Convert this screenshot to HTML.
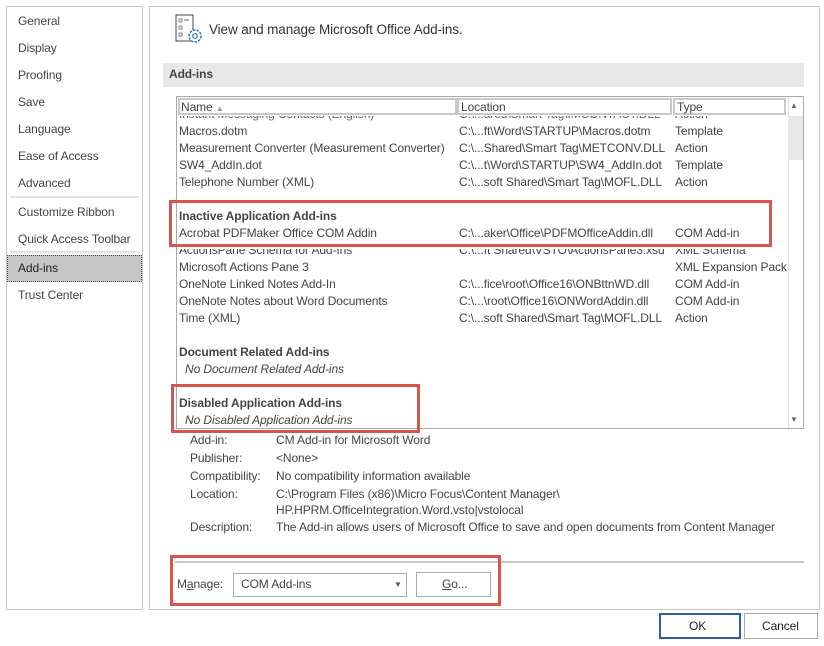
<!DOCTYPE html>
<html><head><meta charset="utf-8"><style>
*{margin:0;padding:0;box-sizing:border-box}
body{width:824px;height:646px;background:#fff;font-family:"Liberation Sans",sans-serif;font-size:12px;letter-spacing:-0.1px;color:#444;position:relative;overflow:hidden}
.a{position:absolute;white-space:nowrap;line-height:14px}
.b{font-weight:bold}
.i{font-style:italic}
.red{position:absolute;border:3px solid #d9534f}
</style></head><body>
<div class="a" style="left:6px;top:6px;width:137px;height:604px;border:1px solid #c8c8c8"></div>
<div class="a" style="left:18px;top:14px">General</div>
<div class="a" style="left:18px;top:41px">Display</div>
<div class="a" style="left:18px;top:68px">Proofing</div>
<div class="a" style="left:18px;top:95px">Save</div>
<div class="a" style="left:18px;top:122px">Language</div>
<div class="a" style="left:18px;top:149px">Ease of Access</div>
<div class="a" style="left:18px;top:176px">Advanced</div>
<div class="a" style="left:10px;top:196px;width:129px;height:2px;background:#e3e3e3"></div>
<div class="a" style="left:18px;top:205px">Customize Ribbon</div>
<div class="a" style="left:18px;top:232px">Quick Access Toolbar</div>
<div class="a" style="left:10px;top:251px;width:129px;height:2px;background:#e3e3e3"></div>
<div class="a" style="left:7px;top:255px;width:135px;height:27px;background:#c6c6c6;border:1px dotted #555"></div>
<div class="a" style="left:18px;top:261px;color:#222">Add-ins</div>
<div class="a" style="left:18px;top:288px">Trust Center</div>
<div class="a" style="left:149px;top:6px;width:671px;height:604px;border:1px solid #c8c8c8"></div>
<svg class="a" style="left:175px;top:14px" width="30" height="32" viewBox="0 0 30 32"><rect x="1" y="1" width="17" height="26" fill="none" stroke="#444"/><rect x="4" y="5" width="3" height="3" fill="none" stroke="#666" stroke-width=".8"/><line x1="9" y1="6" x2="14" y2="6" stroke="#666"/><rect x="4" y="12" width="3" height="3" fill="none" stroke="#666" stroke-width=".8"/><rect x="4" y="19" width="3" height="3" fill="none" stroke="#666" stroke-width=".8"/><circle cx="20" cy="22" r="6" fill="#fff" stroke="#2b79c2" stroke-width="1.5" stroke-dasharray="2.5 1.2"/><circle cx="20" cy="22" r="2.3" fill="none" stroke="#2b79c2" stroke-width="1.2"/></svg>
<div class="a" style="left:209px;top:23px;font-size:13.5px;color:#333">View and manage Microsoft Office Add-ins.</div>
<div class="a" style="left:163px;top:63px;width:641px;height:24px;background:#e8e8e8"></div>
<div class="a b" style="left:169px;top:67px">Add-ins</div>
<div class="a" style="left:176px;top:96px;width:628px;height:333px;border:1px solid #aaa;overflow:hidden">
 <div class="a" style="left:0;top:18px;width:610px;height:300px;overflow:hidden">
  <div class="a" style="left:2px;top:-8px;color:#666">Instant Messaging Contacts (English)</div><div class="a" style="left:282px;top:-8px;color:#666">C:\...ared\Smart Tag\IMCONTACT.DLL</div><div class="a" style="left:498px;top:-8px;color:#666">Action</div>
 </div>
 <div class="a" style="left:0;top:0;width:611px;height:19px;background:#fff"></div>
 <div class="a" style="left:1px;top:1px;width:279px;height:17px;border:2px solid #c8c8c8"></div>
 <div class="a" style="left:4px;top:3px">Name <span style="font-size:8px;color:#999">&#9650;</span></div>
 <div class="a" style="left:280px;top:1px;width:215px;height:17px;border:2px solid #c8c8c8"></div>
 <div class="a" style="left:284px;top:3px">Location</div>
 <div class="a" style="left:496px;top:1px;width:113px;height:17px;border:2px solid #c8c8c8"></div>
 <div class="a" style="left:500px;top:3px">Type</div>
 <div class="a" style="left:611px;top:0;width:16px;height:331px;border-left:1px solid #ddd"></div>
 <div class="a" style="left:611px;top:19px;width:16px;height:44px;background:#e8e8e8"></div>
 <div class="a" style="left:613px;top:2px;font-size:8px;color:#666">&#9650;</div>
 <div class="a" style="left:613px;top:316px;font-size:8px;color:#666">&#9660;</div>
</div>
<div class="a" style="left:179px;top:124px">Macros.dotm</div><div class="a" style="left:459px;top:124px">C:\...ft\Word\STARTUP\Macros.dotm</div><div class="a" style="left:675px;top:124px">Template</div>
<div class="a" style="left:179px;top:141px">Measurement Converter (Measurement Converter)</div><div class="a" style="left:459px;top:141px">C:\...Shared\Smart Tag\METCONV.DLL</div><div class="a" style="left:675px;top:141px">Action</div>
<div class="a" style="left:179px;top:158px">SW4_AddIn.dot</div><div class="a" style="left:459px;top:158px">C:\...t\Word\STARTUP\SW4_AddIn.dot</div><div class="a" style="left:675px;top:158px">Template</div>
<div class="a" style="left:179px;top:175px">Telephone Number (XML)</div><div class="a" style="left:459px;top:175px">C:\...soft Shared\Smart Tag\MOFL.DLL</div><div class="a" style="left:675px;top:175px">Action</div>
<div class="a b" style="left:179px;top:209px">Inactive Application Add-ins</div>
<div class="a" style="left:179px;top:226px">Acrobat PDFMaker Office COM Addin</div><div class="a" style="left:459px;top:226px">C:\...aker\Office\PDFMOfficeAddin.dll</div><div class="a" style="left:675px;top:226px">COM Add-in</div>
<div class="a" style="left:179px;top:249px;height:8px;overflow:hidden"><div style="margin-top:-6px">ActionsPane Schema for Add-Ins</div></div>
<div class="a" style="left:459px;top:249px;height:8px;overflow:hidden"><div style="margin-top:-6px">C:\...ft Shared\VSTO\ActionsPane3.xsd</div></div>
<div class="a" style="left:675px;top:249px;height:8px;overflow:hidden"><div style="margin-top:-6px">XML Schema</div></div>
<div class="a" style="left:179px;top:260px">Microsoft Actions Pane 3</div><div class="a" style="left:675px;top:260px">XML Expansion Pack</div>
<div class="a" style="left:179px;top:277px">OneNote Linked Notes Add-In</div><div class="a" style="left:459px;top:277px">C:\...fice\root\Office16\ONBttnWD.dll</div><div class="a" style="left:675px;top:277px">COM Add-in</div>
<div class="a" style="left:179px;top:294px">OneNote Notes about Word Documents</div><div class="a" style="left:459px;top:294px">C:\...\root\Office16\ONWordAddin.dll</div><div class="a" style="left:675px;top:294px">COM Add-in</div>
<div class="a" style="left:179px;top:311px">Time (XML)</div><div class="a" style="left:459px;top:311px">C:\...soft Shared\Smart Tag\MOFL.DLL</div><div class="a" style="left:675px;top:311px">Action</div>
<div class="a b" style="left:179px;top:345px">Document Related Add-ins</div>
<div class="a i" style="left:185px;top:362px">No Document Related Add-ins</div>
<div class="a b" style="left:179px;top:396px">Disabled Application Add-ins</div>
<div class="a i" style="left:185px;top:413px">No Disabled Application Add-ins</div>
<div class="red" style="left:169px;top:200px;width:603px;height:47px"></div>
<div class="red" style="left:171px;top:384px;width:249px;height:49px"></div>
<div class="a" style="left:190px;top:433px;height:13px;overflow:hidden">Add-in:</div><div class="a" style="left:276px;top:433px;height:13px;overflow:hidden">CM Add-in for Microsoft Word</div>
<div class="a" style="left:190px;top:451px">Publisher:</div><div class="a" style="left:276px;top:451px">&lt;None&gt;</div>
<div class="a" style="left:190px;top:469px">Compatibility:</div><div class="a" style="left:276px;top:469px">No compatibility information available</div>
<div class="a" style="left:190px;top:487px">Location:</div><div class="a" style="left:276px;top:487px">C:\Program Files (x86)\Micro Focus\Content Manager\</div>
<div class="a" style="left:276px;top:503px">HP.HPRM.OfficeIntegration.Word.vsto|vstolocal</div>
<div class="a" style="left:190px;top:520px">Description:</div><div class="a" style="left:276px;top:520px">The Add-in allows users of Microsoft Office to save and open documents from Content Manager</div>
<div class="a" style="left:175px;top:561px;width:629px;height:2px;background:#c8c8c8"></div>
<div class="a" style="left:177px;top:577px">M<u>a</u>nage:</div>
<div class="a" style="left:233px;top:573px;width:174px;height:24px;border:1px solid #aaa"></div>
<div class="a" style="left:241px;top:577px">COM Add-ins</div>
<div class="a" style="left:394px;top:578px;font-size:8px;color:#555">&#9660;</div>
<div class="a" style="left:416px;top:572px;width:75px;height:25px;border:1px solid #aaa"></div>
<div class="a" style="left:442px;top:577px"><u>G</u>o...</div>
<div class="red" style="left:170px;top:555px;width:331px;height:51px"></div>
<div class="a" style="left:659px;top:613px;width:82px;height:26px;border:2px solid #2f5f9e"></div>
<div class="a" style="left:689px;top:619px;color:#222">OK</div>
<div class="a" style="left:744px;top:613px;width:74px;height:26px;border:1px solid #aaa"></div>
<div class="a" style="left:762px;top:619px;color:#222">Cancel</div>
</body></html>
